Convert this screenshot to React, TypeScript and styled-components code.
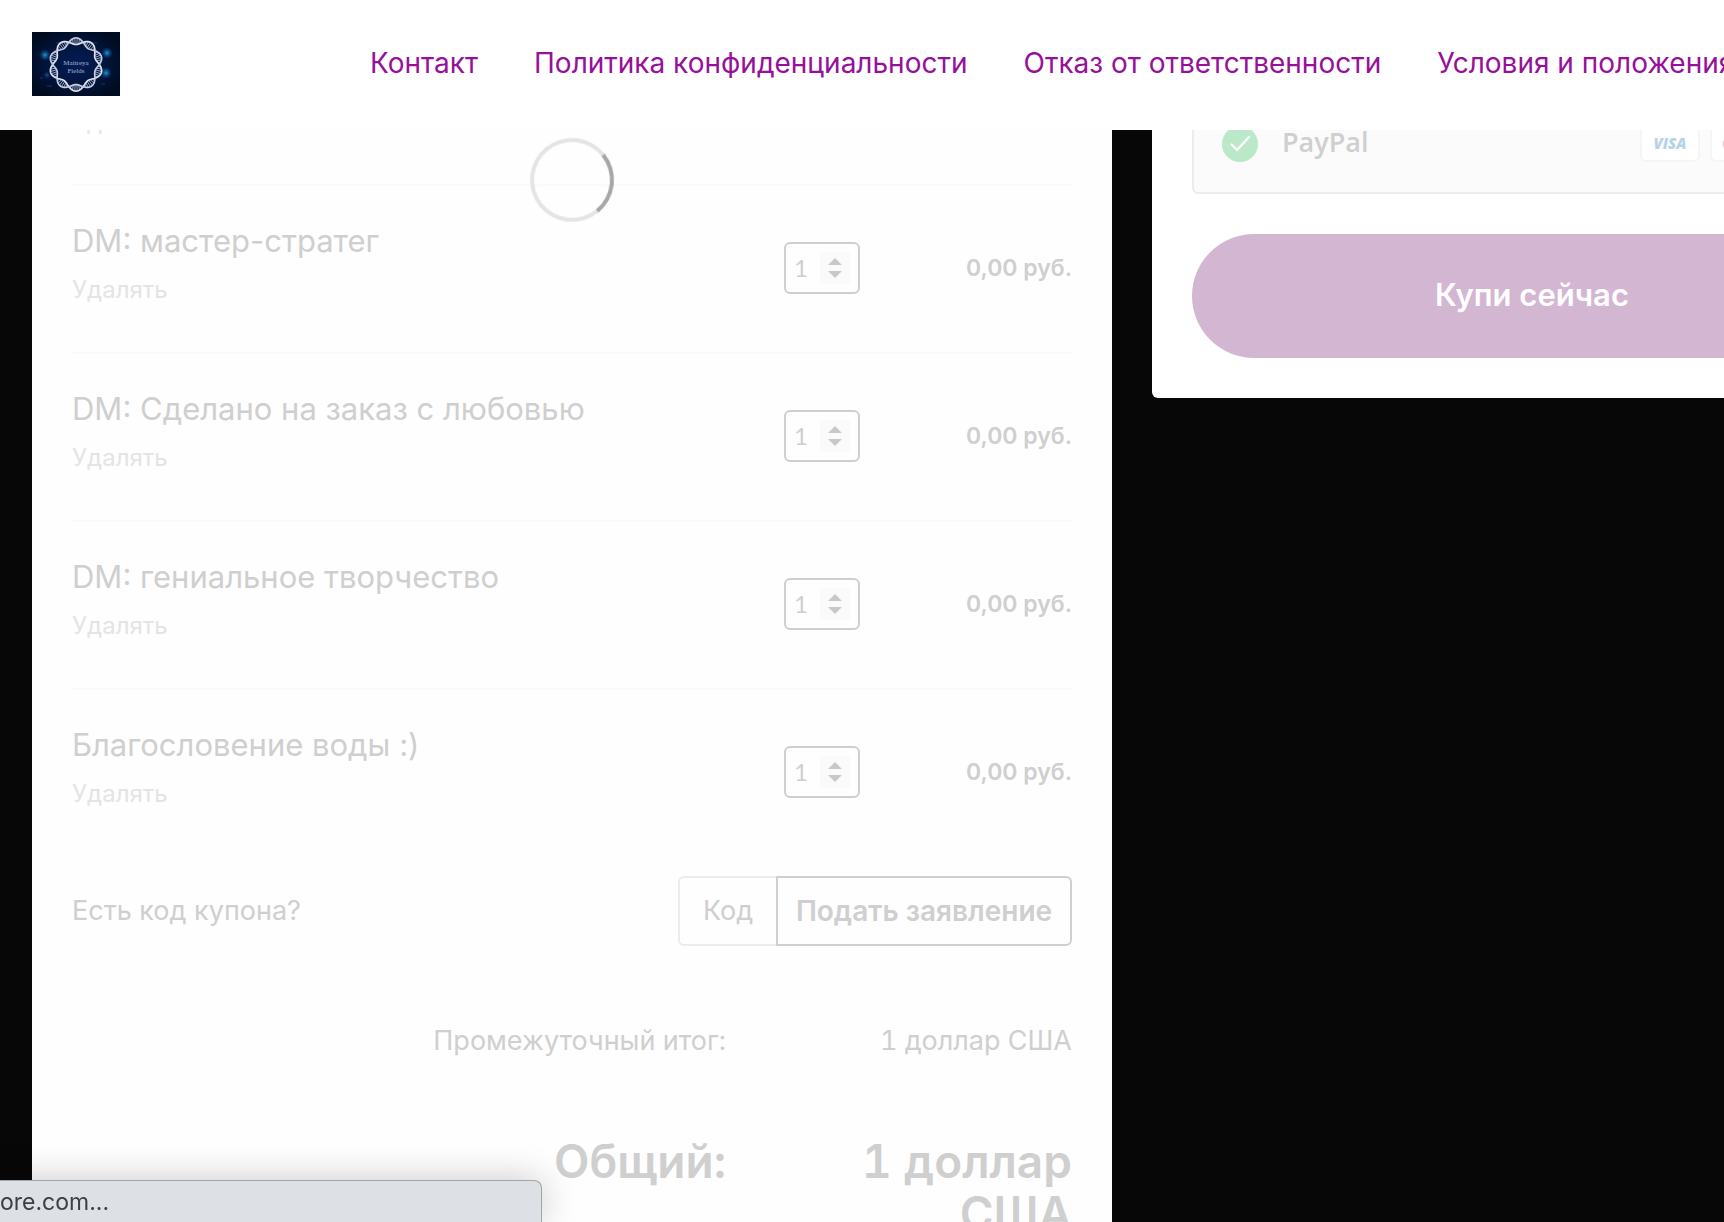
import React from "react";
import styled, { createGlobalStyle } from "styled-components";

const GlobalStyle = createGlobalStyle`
  *, *::before, *::after { box-sizing: border-box; }
  html, body { margin: 0; background: #070707; }
  body { font-family: Inter, "Liberation Sans", sans-serif; color: #cfcfcf; }
  button, input { font: inherit; color: inherit; margin: 0; padding: 0; border: 0; background: none; }
  button { cursor: pointer; }
`;

const Page = styled.div`
  height: 100vh;
  overflow: hidden;
  background: #070707;
`;

const Header = styled.header`
  position: fixed;
  inset: 0 0 auto 0;
  z-index: 2;
  display: flex;
  align-items: center;
  height: 130px;
  padding: 0 32px 4px;
  overflow: hidden;
  background: #ffffff;
`;

const LogoLink = styled.a`
  flex: none;
  display: block;
  margin: 2px 250px 0 0;
  svg { display: block; }
`;

const Nav = styled.nav`
  display: flex;
  gap: 56px;
`;

const NavLink = styled.a`
  flex: none;
  font-size: 28px;
  line-height: 40px;
  color: #96109a;
  text-decoration: none;
  white-space: nowrap;
`;

const Content = styled.main`
  display: grid;
  grid-template-columns: 1fr 760px;
  align-items: start;
  gap: 40px;
  min-width: 1944px;
  padding: 0 32px;
`;

const CartPanel = styled.section`
  min-height: 100vh;
  padding: 18px 40px 40px;
  background: #fefefe;
`;

const ItemList = styled.ul`
  margin: 0;
  padding: 0;
  list-style: none;
`;

const Item = styled.li`
  display: grid;
  grid-template-columns: 1fr 76px 212px;
  align-items: center;
  height: 168px;
  padding-bottom: 2px;
  border-bottom: 2px solid #fafafa;
  &:last-child { border-bottom-color: transparent; }
`;

const ItemInfo = styled.div`
  align-self: start;
  display: flex;
  flex-direction: column;
  align-items: flex-start;
  gap: 13px;
  padding-top: 35px;
`;

const ItemTitle = styled.div`
  min-height: 40px;
  font-size: 31px;
  line-height: 40px;
`;

const RemoveButton = styled.button`
  font-size: 24px;
  line-height: 32px;
  color: #e4e4e4;
`;

const Quantity = styled.label`
  display: flex;
  align-items: center;
  justify-content: space-between;
  height: 52px;
  padding: 0 8px;
  border: 2px solid #cfcfcf;
  border-radius: 6px;
`;

const QuantityInput = styled.input`
  width: 24px;
  font-family: Lato, sans-serif;
  font-size: 24px;
  line-height: 32px;
  appearance: textfield;
  &::-webkit-inner-spin-button { appearance: none; margin: 0; }
`;

const Stepper = styled.span`
  display: flex;
  flex-direction: column;
  align-items: center;
  justify-content: center;
  width: 30px;
  height: 32px;
  background: #fafafa;
  svg { display: block; }
`;

const Price = styled.div`
  font-size: 23px;
  line-height: 32px;
  font-weight: 600;
  text-align: right;
`;

const CouponRow = styled.form`
  display: flex;
  align-items: center;
  justify-content: space-between;
  margin-top: 18px;
  font-size: 27px;
  line-height: 40px;
`;

const CouponField = styled.div`
  display: flex;
  height: 70px;
`;

const CouponInput = styled.input`
  width: 98px;
  padding-left: 23px;
  border: 2px solid #ececec;
  border-right: 0;
  border-radius: 6px 0 0 6px;
  &::placeholder { color: #cfcfcf; opacity: 1; }
`;

const ApplyButton = styled.button`
  width: 296px;
  border: 2px solid #cfcfcf;
  border-radius: 0 6px 6px 0;
  font-size: 28px;
  font-weight: 600;
  white-space: nowrap;
`;

const Totals = styled.dl`
  display: grid;
  grid-template-columns: 1fr 346px;
  row-gap: 74px;
  margin: 75px 0 0;
  text-align: right;
  font-variant-numeric: tabular-nums;
`;

const TotalCell = styled.div<{ $strong?: boolean }>`
  font-size: ${(p) => (p.$strong ? "46px" : "27px")};
  line-height: ${(p) => (p.$strong ? "52px" : "40px")};
  font-weight: ${(p) => (p.$strong ? 600 : 400)};
`;

const TotalLabel = styled(TotalCell).attrs({ as: "dt" })``;

const TotalValue = styled(TotalCell).attrs({ as: "dd" })`
  margin: 0;
  padding-left: 60px;
`;

const PaymentPanel = styled.section`
  display: flex;
  flex-direction: column;
  gap: 40px;
  padding: 94px 40px 40px;
  border-radius: 0 0 6px 6px;
  background: #ffffff;
`;

const PaymentMethod = styled.div`
  display: flex;
  align-items: center;
  height: 100px;
  padding: 0 30px 0 28px;
  border: 2px solid #ececec;
  border-radius: 6px;
  background: #fbfbfb;
`;

const MethodName = styled.span`
  flex: 1;
  padding-bottom: 4px;
  margin-left: 24px;
  font-family: "Open Sans", sans-serif;
  font-size: 27px;
  line-height: 40px;
  font-weight: 600;
`;

const Cards = styled.div`
  display: flex;
  gap: 10px;
`;

const CardBadge = styled.span`
  display: flex;
  align-items: center;
  justify-content: center;
  width: 60px;
  height: 36px;
  border: 2px solid #f5f5f5;
  border-radius: 6px;
  background: #ffffff;
`;

const BuyButton = styled.button`
  height: 124px;
  padding-bottom: 2px;
  border-radius: 62px;
  background: #d3b6d2;
  color: #ffffff;
  font-size: 31px;
  line-height: 40px;
  font-weight: 600;
`;

const Spinner = styled.div`
  position: fixed;
  top: 138px;
  left: 530px;
  width: 84px;
  height: 84px;
  border: 4px solid #e4e4e4;
  border-right-color: #a6a6a6;
  border-radius: 50%;
  transform: rotate(6deg);
`;

const StatusBubble = styled.div`
  position: fixed;
  left: 0;
  bottom: 0;
  width: 542px;
  height: 42px;
  border: 1px solid #a3a5a8;
  border-width: 1px 1px 0 0;
  border-radius: 0 8px 0 0;
  background: #dde0e4;
  box-shadow: 0 0 36px rgba(0, 0, 0, 0.22);
  color: #3c4043;
  font-size: 23px;
  line-height: 42px;
`;

function strand(phase: number): string {
  const points: string[] = [];
  for (let i = 0; i <= 180; i++) {
    const a = (i / 180) * Math.PI * 2;
    const r = 23.3 + 3.3 * Math.sin(5 * a + phase);
    points.push(`${(44 + r * Math.cos(a)).toFixed(2)},${(32.5 + r * Math.sin(a)).toFixed(2)}`);
  }
  return points.join(" ");
}

function rungs(): string {
  let d = "";
  for (let i = 0; i < 70; i++) {
    const a = (i / 70) * Math.PI * 2;
    const s = 3.2 * Math.abs(Math.sin(5 * a));
    if (s < 1) continue;
    const c = Math.cos(a);
    const n = Math.sin(a);
    d += `M${(44 + (23.3 - s) * c).toFixed(2)} ${(32.5 + (23.3 - s) * n).toFixed(2)}L${(44 + (23.3 + s) * c).toFixed(2)} ${(32.5 + (23.3 + s) * n).toFixed(2)}`;
  }
  return d;
}

function Logo() {
  return (
    <svg width="88" height="64" viewBox="0 0 88 64" role="img" aria-label="Maitreya Fields">
      <defs>
        <radialGradient id="night">
          <stop offset="0" stopColor="#021d54" />
          <stop offset="0.5" stopColor="#021642" />
          <stop offset="1" stopColor="#010c22" />
        </radialGradient>
        <radialGradient id="glow">
          <stop offset="0" stopColor="#2496cf" />
          <stop offset="0.45" stopColor="#0d568f" stopOpacity="0.8" />
          <stop offset="1" stopColor="#0a3a70" stopOpacity="0" />
        </radialGradient>
      </defs>
      <rect width="88" height="64" fill="#010c22" />
      <ellipse cx="44" cy="32" rx="50" ry="36" fill="url(#night)" />
      <circle cx="13" cy="23" r="6" fill="url(#glow)" />
      <circle cx="75" cy="21" r="6" fill="url(#glow)" />
      <circle cx="74" cy="41" r="6" fill="url(#glow)" />
      <circle cx="15" cy="43" r="4" fill="url(#glow)" opacity="0.5" />
      <path d="M15 54h5M69 52h4M8 46h3M24 11h3M61 11h4" stroke="#48308c" opacity="0.7" />
      <path d={rungs()} stroke="#aeb8d2" strokeWidth="0.9" />
      <polyline points={strand(0)} fill="none" stroke="#dfe3ef" strokeWidth="1.7" />
      <polyline points={strand(Math.PI)} fill="none" stroke="#c3cade" strokeWidth="1.7" />
      <g fill="#a9b4d4" fontFamily="Liberation Serif, serif" fontSize="7" textAnchor="middle">
        <text x="44" y="33">Maitreya</text>
        <text x="44" y="41">Fields</text>
      </g>
    </svg>
  );
}

const navItems = [
  "Контакт",
  "Политика конфиденциальности",
  "Отказ от ответственности",
  "Условия и положения",
];

const items = [
  { id: "scrolled", title: "" },
  { id: "strategist", title: "DM: мастер-стратег" },
  { id: "custom", title: "DM: Сделано на заказ с любовью" },
  { id: "creative", title: "DM: гениальное творчество" },
  { id: "water", title: "Благословение воды :)" },
];

function CartItem({ title }: { title: string }) {
  return (
    <Item>
      <ItemInfo>
        <ItemTitle>{title}</ItemTitle>
        <RemoveButton type="button">Удалять</RemoveButton>
      </ItemInfo>
      {title && (
        <>
          <Quantity>
            <QuantityInput type="number" defaultValue={1} min={1} aria-label="Количество" />
            <Stepper>
              <svg width="16" height="22" viewBox="0 0 16 22" fill="#c8c8c8" aria-hidden="true">
                <path d="M8 1l7 7H1zM8 21l7-7H1z" />
              </svg>
            </Stepper>
          </Quantity>
          <Price>0,00 руб.</Price>
        </>
      )}
    </Item>
  );
}

export default function App() {
  return (
    <Page>
      <GlobalStyle />
      <Header>
        <LogoLink href="#">
          <Logo />
        </LogoLink>
        <Nav>
          {navItems.map((label) => (
            <NavLink href="#" key={label}>{label}</NavLink>
          ))}
        </Nav>
      </Header>

      <Content>
        <CartPanel>
          <ItemList>
            {items.map((item) => (
              <CartItem key={item.id} title={item.title} />
            ))}
          </ItemList>

          <CouponRow onSubmit={(e) => e.preventDefault()}>
            <label htmlFor="coupon">Есть код купона?</label>
            <CouponField>
              <CouponInput id="coupon" type="text" placeholder="Код" />
              <ApplyButton type="submit">Подать заявление</ApplyButton>
            </CouponField>
          </CouponRow>

          <Totals>
            <TotalLabel>Промежуточный итог:</TotalLabel>
            <TotalValue>1 доллар США</TotalValue>
            <TotalLabel $strong>Общий:</TotalLabel>
            <TotalValue $strong>1 доллар США</TotalValue>
          </Totals>
        </CartPanel>

        <PaymentPanel>
          <PaymentMethod>
            <svg width="36" height="36" viewBox="0 0 36 36" aria-hidden="true">
              <circle cx="18" cy="18" r="18" fill="#bbe8c9" />
              <path d="M9.500 18.500l5.500 5.500 12-13" fill="none" stroke="#fff" strokeWidth="2.400" strokeLinecap="round" strokeLinejoin="round" />
            </svg>
            <MethodName>PayPal</MethodName>
            <Cards>
              <CardBadge>
                <svg width="40" height="16" viewBox="0 0 40 16" role="img" aria-label="VISA">
                  <defs>
                    <linearGradient id="visa" x1="0" y1="0" x2="1" y2="0.3">
                      <stop offset="0.1" stopColor="#fbdcb8" />
                      <stop offset="0.13" stopColor="#b5d2e8" />
                    </linearGradient>
                  </defs>
                  <text x="20" y="13" textAnchor="middle" fontFamily="Open Sans, sans-serif" fontSize="15" fontWeight="800" fontStyle="italic" fill="url(#visa)">VISA</text>
                </svg>
              </CardBadge>
              <CardBadge>
                <svg width="36" height="22" viewBox="0 0 36 22" aria-hidden="true">
                  <circle cx="11" cy="11" r="10" fill="#f7b6bd" />
                  <circle cx="25" cy="11" r="10" fill="#fcdcb4" />
                </svg>
              </CardBadge>
              <CardBadge>
                <svg width="36" height="22" viewBox="0 0 36 22" aria-hidden="true">
                  <rect width="36" height="22" rx="2" fill="#b8dcf1" />
                </svg>
              </CardBadge>
            </Cards>
          </PaymentMethod>
          <BuyButton type="button">Купи сейчас</BuyButton>
        </PaymentPanel>
      </Content>

      <Spinner role="status" aria-label="Загрузка" />
      <StatusBubble>ore.com...</StatusBubble>
    </Page>
  );
}
